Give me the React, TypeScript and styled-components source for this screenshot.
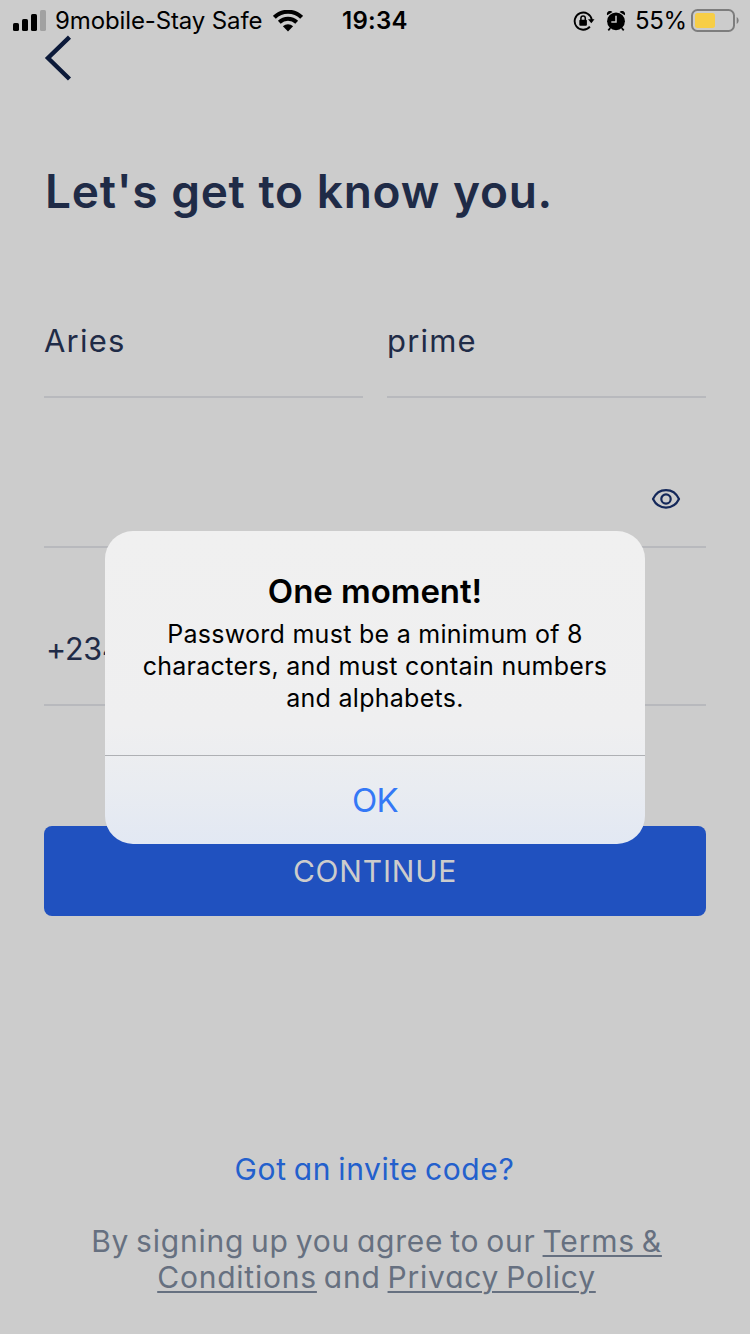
import React from "react";
import styled, { createGlobalStyle } from "styled-components";

const Global = createGlobalStyle`
  *, *::before, *::after { box-sizing: border-box; }
  body { margin: 0; background: #cccccc; }
  button { border: 0; padding: 0; background: none; font: inherit; color: inherit; }
`;

const Screen = styled.main`
  position: relative;
  width: 750px;
  height: 1334px;
  overflow: hidden;
  display: flex;
  flex-direction: column;
  background: #cccccc;
  color: #1f2b47;
  font-family: Inter, "Noto Sans", sans-serif;
  font-feature-settings: "cv11", "ss03";
`;

const StatusBar = styled.header`
  height: 40px;
  display: flex;
  align-items: center;
  padding: 2px 11px 0 13px;
  color: #000;
  font-size: 24px;
  line-height: 38px;
  white-space: nowrap;
  font-feature-settings: normal;
  svg { display: block; flex: none; }
`;

const Carrier = styled.span`
  width: 209px;
  margin: 0 9px 0 8px;
  letter-spacing: -0.12px;
`;

const Clock = styled.span`
  width: 68px;
  margin-left: 39px;
  font-weight: 600;
  letter-spacing: 0.3px;
`;

const StatusRight = styled.div`
  margin-left: auto;
  display: flex;
  align-items: center;
`;

const StatusIcons = styled.div`
  display: flex;
  align-items: center;
  gap: 11px;
`;

const Percent = styled.span`
  width: 51px;
  margin: 0 5px 0 9px;
  letter-spacing: -0.4px;
`;

const BackButton = styled.button`
  width: 30px;
  height: 48px;
  margin: -6px 0 0 43px;
  svg { display: block; }
`;

const Title = styled.h1`
  margin: 79px 0 0 45px;
  font-size: 46px;
  line-height: 60px;
  font-weight: 600;
  letter-spacing: 0.75px;
  word-spacing: 0.6px;
  white-space: nowrap;
`;

const Form = styled.form`
  display: flex;
  flex-direction: column;
  margin: 77px 44px 0;
`;

const NameRow = styled.div`
  display: flex;
  gap: 24px;
  > * { flex: 1 1 0; }
`;

const Field = styled.div<{ $height: number; $lift: number; $tight?: boolean }>`
  height: ${(p) => p.$height}px;
  padding: 0 0 ${(p) => p.$lift}px ${(p) => (p.$tight ? 2 : 0)}px;
  display: flex;
  align-items: flex-end;
  border-bottom: 2px solid #b8b9bd;
  font-size: ${(p) => (p.$tight ? 30.5 : 31)}px;
  line-height: 40px;
  letter-spacing: ${(p) => (p.$tight ? -0.2 : 1.2)}px;
`;

const EyeButton = styled.button`
  margin: 0 25px 0 auto;
  width: 30px;
  height: 22px;
  svg { display: block; }
`;

const Continue = styled.button`
  height: 90px;
  margin-top: 120px;
  border-radius: 8px;
  background: #2051bf;
  color: #cccccc;
  font-size: 30px;
  line-height: 90px;
  letter-spacing: 0.8px;
`;

const Invite = styled.a`
  margin-top: 235px;
  align-self: center;
  padding-right: 1px;
  color: #2360cc;
  font-size: 30px;
  line-height: 36px;
  letter-spacing: 0.65px;
  word-spacing: -2px;
`;

const Legal = styled.p`
  margin: 36px 0 0;
  padding-left: 3px;
  text-align: center;
  color: #667080;
  font-size: 30px;
  line-height: 36px;
  letter-spacing: 0.78px;
  word-spacing: -2.3px;
  white-space: nowrap;
`;

const LegalLink = styled.a`
  text-decoration: underline;
  text-decoration-thickness: 2px;
  text-underline-offset: 3px;
`;

const Alert = styled.section`
  position: absolute;
  left: 105px;
  top: 531px;
  width: 540px;
  height: 313px;
  border-radius: 28px;
  overflow: hidden;
  display: flex;
  flex-direction: column;
  background: linear-gradient(#f0f0f0 0%, #efeff0 62%, #e9ecf1 82%, #e2e8f3 100%);
  color: #000;
  text-align: center;
  font-feature-settings: normal;
`;

const AlertBody = styled.div`
  height: 225px;
  padding-top: 38px;
  border-bottom: 1px solid #aeb0b4;
`;

const AlertTitle = styled.h2`
  margin: 0;
  font-size: 33px;
  line-height: 44px;
  font-weight: 600;
  letter-spacing: -0.05px;
`;

const AlertText = styled.p`
  margin: 5px 0 0;
  font-size: 25px;
  line-height: 32px;
  letter-spacing: 0.28px;
  white-space: nowrap;
`;

const AlertAction = styled.button`
  flex: 1;
  color: #3478f6;
  font-size: 33px;
  letter-spacing: -0.6px;
`;

const Signal = () => (
  <svg width="34" height="22" viewBox="0 0 34 22">
    <rect x="0" y="13" width="6" height="8" rx="1.6" />
    <rect x="9" y="9" width="6" height="12" rx="1.6" />
    <rect x="18" y="4" width="6" height="17" rx="1.6" />
    <rect x="27" y="0" width="6" height="21" rx="1.6" fill="#a1a1a1" />
  </svg>
);

const Wifi = () => (
  <svg width="30" height="22" viewBox="0 0 30 22" fill="none" stroke="#000" strokeWidth="4">
    <path d="M1.4 7.3C9-.2 21-.2 28.6 7.3" />
    <path d="M6.3 12.3C11.2 7.6 18.8 7.6 23.7 12.3" />
    <path d="M9.9 16.3C12.8 13.5 17.2 13.5 20.1 16.3L15 21.4Z" fill="#000" stroke="none" />
  </svg>
);

const RotationLock = () => (
  <svg width="22" height="22" viewBox="0 0 22 22" fill="none" stroke="#000">
    <path d="M18.8 10A8.6 8.6 0 1 0 16.9 16.6" strokeWidth="1.9" />
    <path d="M15 9.2H21.5L18.3 13.2Z" fill="#000" stroke="none" />
    <rect x="6.3" y="9.7" width="7.6" height="6" rx="1" fill="#000" stroke="none" />
    <path d="M7.9 10V8.2a2.2 2.2 0 0 1 4.4 0V10" strokeWidth="1.5" />
  </svg>
);

const AlarmClock = () => (
  <svg width="20" height="22" viewBox="0 0 20 22">
    <circle cx="10" cy="11.3" r="8.9" />
    <path d="M1.2 5.2C.3 3 1.8 1 4 1c1 0 2 .4 2.5 1.1ZM18.8 5.2C19.7 3 18.2 1 16 1c-1 0-2 .4-2.5 1.1Z" />
    <path d="M4.3 18 2.3 20.3M15.7 18l2 2.3" stroke="#000" strokeWidth="1.8" />
    <path d="M10 5.8v6.3H5.3" fill="none" stroke="#cccccc" strokeWidth="1.5" />
  </svg>
);

const Battery = () => (
  <svg width="48" height="24" viewBox="0 0 48 24">
    <rect x="1" y="1" width="42" height="21" rx="5.5" fill="none" stroke="#7d7d7d" strokeWidth="2" />
    <rect x="4" y="4" width="20" height="15" rx="2.5" fill="#f7ce46" />
    <path d="M45.7 8c2.6 1.4 2.6 5.6 0 7Z" fill="#7d7d7d" />
  </svg>
);

const Eye = () => (
  <svg width="30" height="22" viewBox="0 0 30 22" fill="none" stroke="#14285a" strokeWidth="2.2">
    <path d="M2 11C7.5-.8 22.5-.8 28 11C22.5 22.4 7.5 22.4 2 11Z" strokeLinejoin="round" />
    <circle cx="15" cy="11" r="4.7" />
  </svg>
);

export default function App() {
  return (
    <>
      <Global />
      <Screen>
        <StatusBar>
          <Signal />
          <Carrier>9mobile-Stay Safe</Carrier>
          <Wifi />
          <Clock>19:34</Clock>
          <StatusRight>
            <StatusIcons>
              <RotationLock />
              <AlarmClock />
            </StatusIcons>
            <Percent>55%</Percent>
            <Battery />
          </StatusRight>
        </StatusBar>
        <BackButton type="button" aria-label="Back">
          <svg width="30" height="48" viewBox="0 0 30 48" fill="none" stroke="#0c1a3a" strokeWidth="4.4">
            <path d="M26.5 3.2 5 24 26.5 45" />
          </svg>
        </BackButton>
        <Title>Let's get to know you.</Title>
        <Form>
          <NameRow>
            <Field $height={100} $lift={35}>Aries</Field>
            <Field $height={100} $lift={35}>prime</Field>
          </NameRow>
          <Field $height={150} $lift={36}>
            <EyeButton type="button" aria-label="Show password"><Eye /></EyeButton>
          </Field>
          <Field $height={158} $lift={35} $tight>+234</Field>
          <Continue type="button">CONTINUE</Continue>
        </Form>
        <Invite>Got an invite code?</Invite>
        <Legal>
          By signing up you agree to our <LegalLink>Terms &amp;</LegalLink>
          <br />
          <LegalLink>Conditions</LegalLink> and <LegalLink>Privacy Policy</LegalLink>
        </Legal>
        <Alert role="alertdialog">
          <AlertBody>
            <AlertTitle>One moment!</AlertTitle>
            <AlertText>
              Password must be a minimum of 8
              <br />
              characters, and must contain numbers
              <br />
              and alphabets.
            </AlertText>
          </AlertBody>
          <AlertAction type="button">OK</AlertAction>
        </Alert>
      </Screen>
    </>
  );
}
